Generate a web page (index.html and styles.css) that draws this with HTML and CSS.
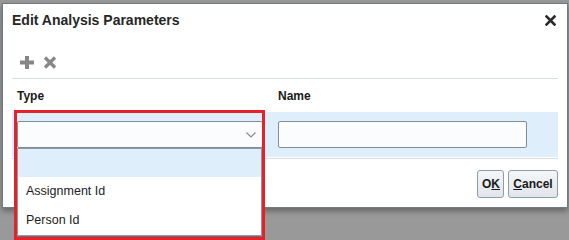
FILE: index.html
```html
<!DOCTYPE html>
<html lang="en">
<head>
  <meta charset="UTF-8" />
  <title>Edit Analysis Parameters</title>
  <link rel="stylesheet" href="styles.css">
</head>
<body>

  <div class="dialog">
    <div class="dlg-head">
      <h1>Edit Analysis Parameters</h1>
      <svg class="close" width="11" height="11" viewBox="0 0 11 11">
        <path d="M1.5 1.5 L9.5 9.5 M9.5 1.5 L1.5 9.5" stroke="#2b2b2b" stroke-width="2.6" stroke-linecap="square"/>
      </svg>
    </div>

    <div class="dlg-body">
      <div class="toolbar">
        <svg width="14" height="13" viewBox="0 0 14 13">
          <rect x="5" y="0" width="4" height="13" fill="#878787"/>
          <rect x="0" y="4.5" width="14" height="4" fill="#878787"/>
        </svg>
        <svg width="14" height="13" viewBox="0 0 14 13">
          <path d="M2 1.5 L12 11.5 M12 1.5 L2 11.5" stroke="#878787" stroke-width="3.4"/>
        </svg>
      </div>

      <div class="grid">
        <div class="th">Type</div>
        <div class="th">Name</div>
      </div>

      <div class="grid band">
        <div class="cell">
          <div class="select">
            <svg class="chev" width="10" height="6" viewBox="0 0 10 6">
              <path d="M0.5 0.5 L5 5 L9.5 0.5" fill="none" stroke="#8a8a8a" stroke-width="1.2"/>
            </svg>
            <ul class="options">
              <li class="active"></li>
              <li>Assignment Id</li>
              <li>Person Id</li>
            </ul>
          </div>
        </div>
        <div class="cell">
          <div class="input"></div>
        </div>
      </div>

      <div class="dlg-foot">
        <button><span>O<u>K</u></span></button>
        <button><span><u>C</u>ancel</span></button>
      </div>
    </div>
  </div>

  <div class="highlight"></div>

</body>
</html>
```

FILE: styles.css
```css
* {
  box-sizing: border-box;
}

body {
  margin: 0;
  height: 240px;
  overflow: hidden;
  background: #999999;
  font-family: 'Liberation Sans', Arial, sans-serif;
  color: #1c1c1c;
  position: relative;
}

.dialog {
  margin: 3px 0 0 2px;
  width: 566px;
  height: 205px;
  background: #fff;
  border: 1px solid #6e7b86;
  box-shadow: 0 3px 6px rgba(0, 0, 0, 0.35);
}

.dlg-head {
  height: 36px;
  padding: 8px 11px 0 9px;
  display: flex;
  justify-content: space-between;
  align-items: flex-start;
}

.dlg-head h1 {
  margin: 0;
  font-size: 14px;
  line-height: 16px;
  font-weight: bold;
  color: #262626;
}

.close {
  margin-top: 3px;
}

.dlg-body {
  margin: 0 9px;
}

.toolbar {
  display: flex;
  gap: 9px;
  padding: 16px 0 9px 8px;
  border-bottom: 1px solid #d6dde3;
}

.grid {
  display: grid;
  grid-template-columns: 261px 261px;
}

.th {
  padding: 10px 0 8px 5px;
  font-size: 12px;
  line-height: 15px;
  font-weight: bold;
  color: #1a1a1a;
}

.band {
  background: #dfeefb;
  height: 45px;
  padding-top: 9px;
}

.cell {
  padding-left: 5px;
}

.select,
.input {
  height: 27px;
  border: 1px solid #7e8e9b;
  border-radius: 2px;
  background: #fbfcfe;
}

.select {
  width: 246px;
  position: relative;
}

.input {
  width: 249px;
}

.chev {
  position: absolute;
  right: 6px;
  top: 10px;
}

.options {
  position: absolute;
  left: -1px;
  top: 26px;
  width: 245px;
  margin: 0;
  padding: 0;
  list-style: none;
  background: #fff;
  border: 1px solid #8d9aa6;
  box-shadow: 0 2px 3px rgba(0, 0, 0, 0.35);
  z-index: 2;
}

.options li {
  height: 29px;
  padding-left: 8px;
  font-size: 12.5px;
  line-height: 29px;
  color: #222;
}

.options li.active {
  height: 28px;
  background: #dfeefb;
}

.dlg-foot {
  border-top: 1px solid #d6dde3;
  margin-top: 1px;
  padding-top: 11px;
  display: flex;
  justify-content: flex-end;
  gap: 4px;
}

.dlg-foot button {
  height: 28px;
  padding: 0 4px;
  font-family: 'Liberation Sans', Arial, sans-serif;
  font-size: 12px;
  font-weight: bold;
  color: #1a1a1a;
  background: linear-gradient(#f4f6f8, #e1e6eb);
  border: 1px solid #8c9cab;
  border-radius: 3px;
}

.dlg-foot button:first-child {
  width: 27px;
}

.dlg-foot button:last-child {
  width: 50px;
}

.highlight {
  position: absolute;
  left: 14px;
  top: 110px;
  width: 251px;
  height: 130px;
  border: 3px solid #e8202a;
  z-index: 3;
}
```
